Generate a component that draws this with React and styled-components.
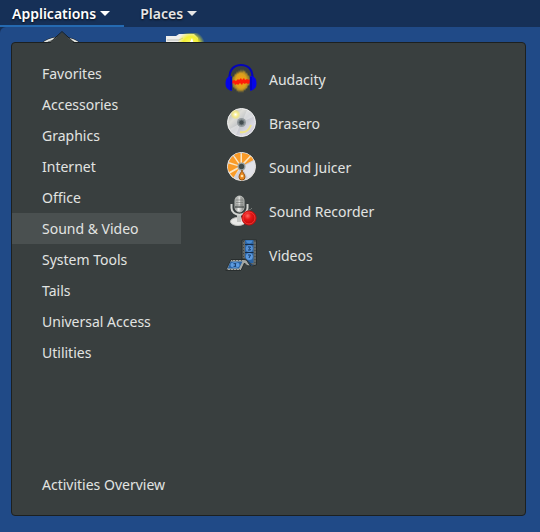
import React, { useState } from "react";
import styled, { createGlobalStyle } from "styled-components";

const GlobalStyle = createGlobalStyle`
  * {
    box-sizing: border-box;
  }

  body {
    margin: 0;
    background: #163057;
    font-family: "Noto Sans", "Open Sans", sans-serif;
  }
`;

const Screen = styled.div`
  display: flex;
  flex-direction: column;
  min-height: 100vh;
`;

// top bar
const TopBar = styled.nav`
  display: flex;
  height: 27px;
  background: #163057;
`;

const TopButton = styled.button`
  display: flex;
  align-items: center;
  gap: 4px;
  padding: 2px 14px 0 ${(props) => (props.$open ? "12px" : "16px")};
  border: none;
  border-bottom: 2px solid ${(props) => (props.$open ? "#256ab1" : "transparent")};
  background: transparent;
  color: ${(props) => (props.$open ? "#fff" : "#e6e6e6")};
  font-family: inherit;
  font-size: 14px;
  font-weight: 600;
  line-height: 20px;
  text-shadow: 0 1px 2px rgba(0, 0, 0, 0.8);
  white-space: nowrap;
`;

const Caret = styled.span`
  border: 5px solid transparent;
  border-top-color: currentColor;
  border-bottom: none;
`;

// desktop
const Desktop = styled.main`
  position: relative;
  display: flex;
  flex: 1;
  padding: 15px 14px 16px 11px;
  border-top-left-radius: 6px;
  background: #204a87;
`;

const DesktopIcon = styled.svg`
  position: absolute;
  top: 6px;
  left: ${(props) => props.$left}px;
`;

// menu
const Menu = styled.section`
  position: relative;
  display: flex;
  flex: 1;
  padding: 14px 0 15px;
  border: 1px solid #1c2020;
  border-radius: 4px;
  background: #393f3f;
`;

const MenuArrow = styled.svg`
  position: absolute;
  top: -12px;
  left: 37px;
`;

const Sidebar = styled.div`
  display: flex;
  flex-direction: column;
  justify-content: space-between;
  width: 169px;
  padding-top: 1px;
`;

const List = styled.ul`
  margin: 0;
  padding: 0;
  list-style: none;
`;

const Category = styled.button`
  display: block;
  width: 100%;
  height: 31px;
  padding: 0 0 0 30px;
  border: none;
  background: ${(props) => (props.$selected ? "#4a5050" : "transparent")};
  color: #e2e4e2;
  font-family: inherit;
  font-size: 14px;
  line-height: 31px;
  text-align: left;
  white-space: nowrap;
`;

const Apps = styled(List)`
  flex: 1;
  padding-left: 44px;
`;

const AppButton = styled.button`
  display: flex;
  align-items: center;
  gap: 12px;
  width: 100%;
  height: 44px;
  padding: 0;
  border: none;
  background: transparent;
  color: #e2e4e2;
  font-family: inherit;
  font-size: 14px;
  text-align: left;
`;

const Icon = ({ children }) => (
  <svg width="32" height="32" viewBox="0 0 32 32" aria-hidden="true">
    {children}
  </svg>
);

const AudacityIcon = () => (
  <Icon>
    <defs>
      <radialGradient id="wave">
        <stop offset="0" stopColor="#ff9c10" />
        <stop offset="0.6" stopColor="#dca01c" />
        <stop offset="1" stopColor="#7d7030" />
      </radialGradient>
    </defs>
    <path
      d="M7 16l1-3 1 1 1-4 1 2 1-4 1 3 1-4 1 3 1-4 1 4 1-4 1 3 1-2 1 4 1-2 1 4 1-1 1 4v5l-1 2-1-1-1 4-1-1-1 3-1-2-1 4-1-3-1 3-1-3-1 3-1-3-1 2-1-4-1 2-1-3-1 1-1-4z"
      fill="url(#wave)"
    />
    <path
      d="M7 18l2-1 2 1 2-2 1 1 2-2 1 2 2-2 1 2 2-1 2 1 1-1v4l-2 1-2-1-1 1-2-1-1 2-2-2-2 2-1-1-2 1-1-2-2 1-2-1z"
      fill="#ff1c08"
    />
    <path
      d="M4.500 15C4.500 6.500 9 2 16 2s11.500 4.500 11.500 13"
      fill="none"
      stroke="#0505b8"
      strokeWidth="2.200"
    />
    <path d="M6.500 13C2.500 13 .5 16 .5 20.500S3 27 6.500 28c1 0 1-15 0-15z" fill="#0505e8" />
    <path d="M25.500 13c4 0 6 3 6 7.500S29 27 25.500 28c-1 0-1-15 0-15z" fill="#0505e8" />
    <path d="M6 14v13M26 14v13" stroke="#0303a0" />
  </Icon>
);

const BraseroIcon = () => (
  <Icon>
    <defs>
      <linearGradient id="disc" x1="0" y1="0" x2="1" y2="1">
        <stop offset="0" stopColor="#a9aba2" />
        <stop offset="0.300" stopColor="#deded9" />
        <stop offset="0.500" stopColor="#c0c3c7" />
        <stop offset="0.750" stopColor="#dcdae4" />
        <stop offset="1" stopColor="#b0acbc" />
      </linearGradient>
      <radialGradient id="shine">
        <stop offset="0" stopColor="#fff" />
        <stop offset="0.500" stopColor="#f5eb88" />
        <stop offset="1" stopColor="#f5e65a" stopOpacity="0" />
      </radialGradient>
    </defs>
    <circle cx="16.500" cy="15.500" r="14" fill="url(#disc)" stroke="#f3f3f3" />
    <path d="M16 16L5 22a13 13 0 0 0 6 6zM17 15l5-12a13 13 0 0 1 6 7z" fill="#fff" opacity="0.350" />
    <path d="M15 25c5 1 9-2 11-7" fill="none" stroke="#eee38b" strokeWidth="2" />
    <circle cx="10.500" cy="7.500" r="5" fill="url(#shine)" />
    <circle cx="16.500" cy="15.500" r="4.500" fill="#939a9d" />
    <circle cx="16.500" cy="15.500" r="2.500" fill="#424c4f" stroke="#687276" />
  </Icon>
);

const JuicerIcon = () => (
  <Icon>
    <circle cx="16.500" cy="15.500" r="14" fill="#d0d0da" stroke="#eee9e2" />
    <path d="M17 16l12-6a14 14 0 0 1-6 17z" fill="#e2e2e8" />
    <path d="M16.500 15.500L8 27A14 14 0 1 1 28 7z" fill="#fbe6c4" />
    <path
      d="M14.500 14.500L4 11c1-3 2-4 4-6zM15.500 13.500L9 4c2-1.500 4-2 6.500-2zM17 13V2c3 0 6 1 8 2.500zM18 14.500l8-9 2.500 3.500zM14 15.500L3.500 12.500c-1 3-.5 6 .5 8.500zM14 17.500L5 22.500l3.500 4z"
      fill="#f99b28"
    />
    <circle cx="16.500" cy="15.500" r="4" fill="#999f9e" />
    <circle cx="16.500" cy="15.500" r="2.700" fill="#424b4b" />
    <path d="M17 19c0 2-3 4-3 7a3 3 0 0 0 6 0c0-3-3-5-3-7z" fill="#ea871f" stroke="#9b5710" />
    <circle cx="17" cy="25" r="1.300" fill="#ffe1a6" />
  </Icon>
);

const RecorderIcon = () => (
  <Icon>
    <defs>
      <linearGradient id="mic">
        <stop offset="0" stopColor="#858985" />
        <stop offset="0.400" stopColor="#f2f2f0" />
        <stop offset="1" stopColor="#777b77" />
      </linearGradient>
      <radialGradient id="record" cx="0.400" cy="0.350">
        <stop offset="0" stopColor="#ff6860" />
        <stop offset="0.500" stopColor="#e81818" />
        <stop offset="1" stopColor="#cb0c0c" />
      </radialGradient>
    </defs>
    <ellipse cx="13" cy="26.500" rx="7.500" ry="4" fill="#e8e8e6" stroke="#bfc1bd" />
    <path d="M12 20h4v7h-4z" fill="#c2c4c1" />
    <path d="M6.500 9v4c0 9 16 9 16 0V9" fill="none" stroke="#d3d5d1" strokeWidth="2" />
    <rect x="10" y="1" width="9" height="16" rx="4.500" fill="url(#mic)" stroke="#b9bcb8" />
    <path d="M11 5h7M11 7.500h7M11 10h7M13 2v9M16 2v9" stroke="#6e736f" strokeWidth="0.600" />
    <path d="M10 12h9" stroke="#555a57" strokeWidth="1.500" />
    <path d="M21 17c2-3 4-1 6-4" fill="none" stroke="#777d7a" />
    <circle cx="24" cy="23" r="7" fill="url(#record)" stroke="#c30c0c" />
    <circle cx="24" cy="23" r="6" fill="none" stroke="#f85850" strokeWidth="0.600" />
  </Icon>
);

const VideosIcon = () => (
  <Icon>
    <path d="M17 1h14.500v25l-4 1-5-7H17z" fill="#666a67" stroke="#292e2e" />
    <path d="M20 1h8.500v23h-3L20 19z" fill="#2b64a4" />
    <path d="M18.500 2v17M30 2v23" stroke="#3a4042" strokeDasharray="1 2" />
    <path d="M20 5.500h8.500M20 13.500h8.500" stroke="#142c49" />
    <circle cx="24.300" cy="9.500" r="3.500" fill="#5590d4" />
    <path d="M23 8h2.500l-1 1.500 1 1.500H23" fill="none" stroke="#153a68" />
    <path d="M21 1.500h6.500c0 4-6.500 4-6.500 0z" fill="#4a8bd1" />
    <circle cx="24.300" cy="17.500" r="3.500" fill="#5b98dd" />
    <path d="M23 16h2.500l-1.500 3" fill="none" stroke="#153a68" />
    <path d="M21 21c3-1 4 5 8 4.500-3 3-7 1-8-4.500z" fill="#25486f" />
    <path d="M6 20.500h13c4 0 4 5 7 6-3 1-5 0-6.500-2.500L16 31.500H.8z" fill="#a5a8a4" stroke="#292e2e" />
    <path d="M5.500 22.500h12l-3.500 7H2.800z" fill="#2b64a4" />
    <ellipse cx="10" cy="26" rx="4.500" ry="2.800" fill="#5c9be0" />
    <path d="M8.500 24.700H11L10 26l1 1.300H8.500" fill="none" stroke="#153a68" />
    <path d="M7 21.500h12M2 30.500h14" stroke="#5d625f" strokeDasharray="1 2" />
  </Icon>
);

const categories = [
  "Favorites",
  "Accessories",
  "Graphics",
  "Internet",
  "Office",
  "Sound & Video",
  "System Tools",
  "Tails",
  "Universal Access",
  "Utilities",
];

const apps = [
  { name: "Audacity", icon: AudacityIcon },
  { name: "Brasero", icon: BraseroIcon },
  { name: "Sound Juicer", icon: JuicerIcon },
  { name: "Sound Recorder", icon: RecorderIcon },
  { name: "Videos", icon: VideosIcon },
];

const App = () => {
  const [selected, setSelected] = useState("Sound & Video");

  return (
    <>
      <GlobalStyle />
      <Screen>
        <TopBar>
          <TopButton $open aria-expanded="true">
            Applications
            <Caret />
          </TopButton>
          <TopButton aria-expanded="false">
            Places
            <Caret />
          </TopButton>
        </TopBar>

        <Desktop>
          <DesktopIcon $left={38} width="46" height="42" viewBox="0 0 46 42" aria-hidden="true">
            <ellipse cx="23" cy="18" rx="23" ry="14" fill="#424a4c" stroke="#151b20" />
            <ellipse cx="23" cy="18" rx="22" ry="13" fill="none" stroke="#e4e6e2" strokeWidth="2" />
            <path d="M9 11l6-3M37 11l-6-3" stroke="#a3a6a1" strokeWidth="2" />
          </DesktopIcon>
          <DesktopIcon $left={164} width="42" height="42" viewBox="0 0 42 42" aria-hidden="true">
            <defs>
              <radialGradient id="glow">
                <stop offset="0" stopColor="#ffff70" />
                <stop offset="0.600" stopColor="#f2ef20" stopOpacity="0.900" />
                <stop offset="1" stopColor="#f2ef20" stopOpacity="0" />
              </radialGradient>
            </defs>
            <path d="M2 3h10l3-2h15l4 4v36H2z" fill="#eeeeec" />
            <path d="M3 7h12l4-2" fill="none" stroke="#b9bcb7" />
            <circle cx="27" cy="12" r="14" fill="url(#glow)" />
            <path d="M28 5l2 6 7 2-7 3-2 7-3-7-7-3 7-2z" fill="#fff" />
          </DesktopIcon>

          <Menu>
            <MenuArrow width="26" height="13" viewBox="0 0 26 13" aria-hidden="true">
              <path d="M1 12L13 1l12 11v1H1z" fill="#393f3f" />
              <path d="M1 11.500L13 .5l12 11" fill="none" stroke="#1c2020" />
            </MenuArrow>
            <Sidebar>
              <List>
                {categories.map((name) => (
                  <li key={name}>
                    <Category
                      $selected={name === selected}
                      onClick={() => setSelected(name)}
                    >
                      {name}
                    </Category>
                  </li>
                ))}
              </List>
              <Category>Activities Overview</Category>
            </Sidebar>
            <Apps>
              {apps.map(({ name, icon: AppIcon }) => (
                <li key={name}>
                  <AppButton>
                    <AppIcon />
                    {name}
                  </AppButton>
                </li>
              ))}
            </Apps>
          </Menu>
        </Desktop>
      </Screen>
    </>
  );
};

export default App;
